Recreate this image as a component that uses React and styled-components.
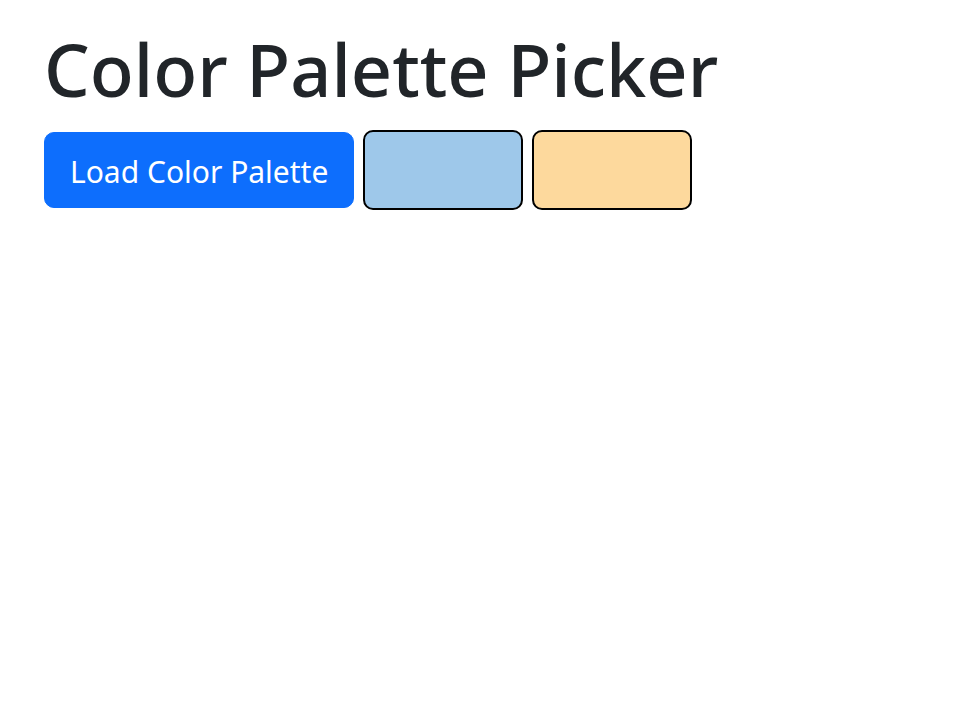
import React from "react";
import styled, { createGlobalStyle } from "styled-components";

const Global = createGlobalStyle`
  html, body { margin: 0; padding: 0; background: #fff; }
  body { font-family: "Noto Sans", "Open Sans", Arial, sans-serif; color: #212529; }
`;

const Page = styled.main`
  padding: 26px 44px;
`;

const Title = styled.h1`
  margin: 0 0 18px;
  font-size: 72px;
  font-weight: 500;
  line-height: 1.2;
  color: #212529;
`;

const Row = styled.div`
  display: flex;
  align-items: center;
  gap: 9px;
`;

const LoadButton = styled.button`
  font-family: inherit;
  font-size: 30px;
  line-height: 42px;
  padding: 18px 25px 14px;
  border: 1px solid #0d6efd;
  border-radius: 10px;
  background: #0d6efd;
  color: #fff;
  cursor: pointer;
`;

const Swatch = styled.div`
  width: 160px;
  height: 80px;
  box-sizing: border-box;
  border: 2px solid #000;
  border-radius: 10px;
  background: ${(p) => p.$color};
`;

export default function App() {
  return (
    <>
      <Global />
      <Page>
        <Title>Color Palette Picker</Title>
        <Row>
          <LoadButton>Load Color Palette</LoadButton>
          <Swatch $color="#9ec8ea" />
          <Swatch $color="#fdd99d" />
        </Row>
      </Page>
    </>
  );
}
